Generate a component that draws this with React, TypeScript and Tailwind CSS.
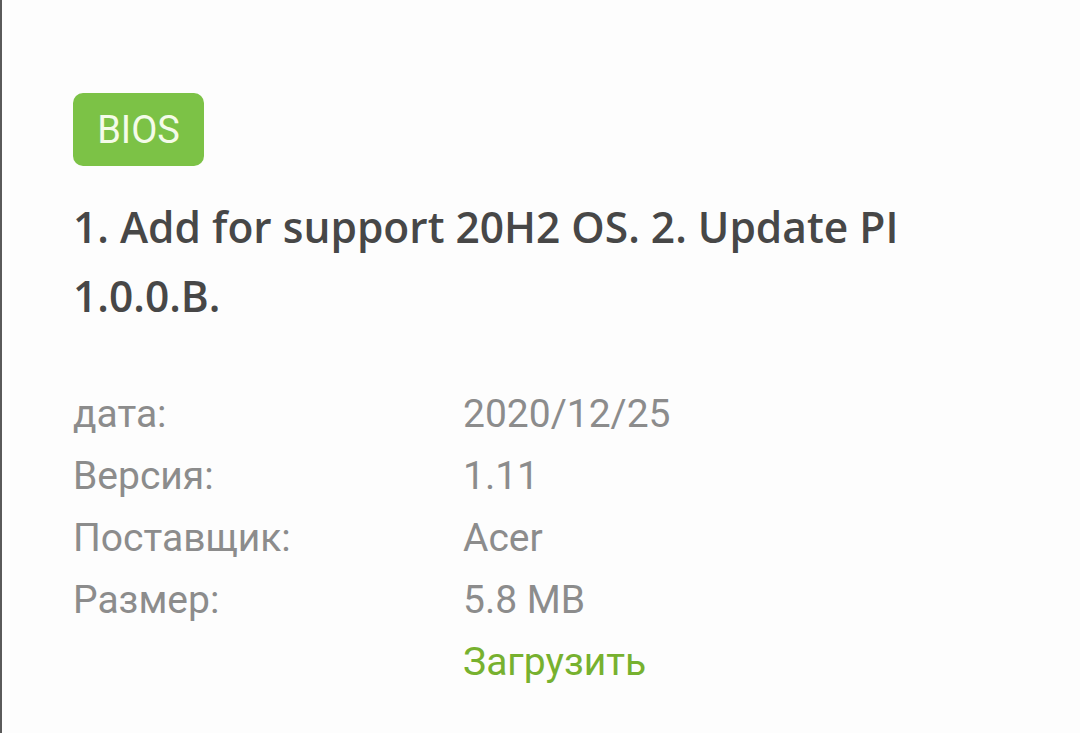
export default function App() {
  const rows: [string, string][] = [
    ["дата:", "2020/12/25"],
    ["Версия:", "1.11"],
    ["Поставщик:", "Acer"],
    ["Размер:", "5.8 MB"],
  ];
  return (
    <div className="w-[1080px] h-[733px] bg-[#fdfdfd] border-l-2 border-[#5a5a5a] overflow-hidden" style={{ fontFamily: '"Open Sans", "Noto Sans", sans-serif' }}>
      <div className="pl-[71px] pt-[93px]">
        <div className="inline-flex items-center justify-center w-[131px] h-[73px] rounded-[10px] bg-[#7cc246] text-[#f4fbe9] text-[38px] leading-none" style={{ fontFamily: 'Roboto, "Noto Sans", sans-serif' }}>
          BIOS
        </div>
        <h1 className="mt-[26px] w-[900px] text-[#474747] text-[42.5px] leading-[69px] font-semibold">
          1. Add for support 20H2 OS. 2. Update PI 1.0.0.B.
        </h1>
        <div className="mt-[53px] grid grid-cols-[390px_1fr] text-[39px] leading-[62px] text-[#8c8c8c]" style={{ fontFamily: 'Roboto, "Noto Sans", sans-serif' }}>
          {rows.map(([k, v]) => (
            <div key={k} className="contents">
              <div>{k}</div>
              <div>{v}</div>
            </div>
          ))}
          <div></div>
          <div className="text-[#77b12f]">Загрузить</div>
        </div>
      </div>
    </div>
  );
}
